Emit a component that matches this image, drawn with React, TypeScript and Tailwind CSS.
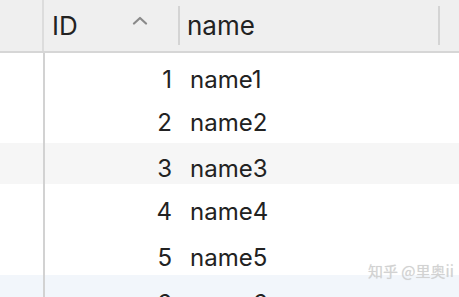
import React from "react";

const rows = [
  { id: 1, name: "name1", h: "h-[45px]", bg: "bg-white", pt: "pt-[8px]" },
  { id: 2, name: "name2", h: "h-[45px]", bg: "bg-white", pt: "pt-[4px]" },
  { id: 3, name: "name3", h: "h-[41px]", bg: "bg-[#f6f6f6]", pt: "pt-[10px]" },
  { id: 4, name: "name4", h: "h-[45px]", bg: "bg-white", pt: "pt-[10px]" },
  { id: 5, name: "name5", h: "h-[46px]", bg: "bg-white", pt: "pt-[11px]" },
  { id: 6, name: "name6", h: "h-[46px]", bg: "bg-[#f2f6fb]", pt: "pt-[12px]" },
];

export default function App() {
  return (
    <div
      className="w-[459px] h-[297px] overflow-hidden bg-white text-[#222] relative"
      style={{ fontFamily: "Inter, 'Noto Sans', sans-serif" }}
    >
      {/* header */}
      <div className="flex h-[53px] bg-[#efefef] border-b-2 border-[#d6d6d6]">
        <div className="w-[44px] shrink-0 border-r-2 border-[#dcdcdc]" />
        <div className="w-[134px] shrink-0 flex items-center justify-between pl-[8px] pr-[30px]">
          <span className="text-[26px] leading-none">ID</span>
          <svg width="16" height="9" viewBox="0 0 16 9" className="mb-[10px]">
            <path d="M2 7.5 L8 2 L14 7.5" fill="none" stroke="#8a8a8a" strokeWidth="2.2" strokeLinecap="round" strokeLinejoin="round" />
          </svg>
        </div>
        <div className="flex items-center">
          <div className="w-[2px] h-[39px] bg-[#d4d4d4]" />
        </div>
        <div className="w-[258px] shrink-0 flex items-center pl-[7px]">
          <span className="text-[26px] leading-none">name</span>
        </div>
        <div className="flex items-center">
          <div className="w-[2px] h-[39px] bg-[#d4d4d4]" />
        </div>
        <div className="flex-1" />
      </div>
      {/* body */}
      <div className="flex flex-col">
        {rows.map((r) => (
          <div key={r.id} className={`flex ${r.h} ${r.bg} shrink-0`}>
            <div className="w-[45px] shrink-0 border-r-2 border-[#d2d2d2]" />
            <div className={`w-[134px] shrink-0 flex items-center justify-end pr-[7px] ${r.pt}`}>
              <span className="text-[24px] leading-none">{r.id}</span>
            </div>
            <div className={`flex-1 flex items-center pl-[11px] ${r.pt}`}>
              <span className="text-[24px] leading-none">{r.name}</span>
            </div>
          </div>
        ))}
      </div>
      <div
        className="absolute left-[368px] top-[263px] text-[15px] leading-none text-[#d2d2d2] whitespace-nowrap"
        style={{ fontFamily: "'Noto Sans CJK SC', sans-serif", textShadow: "0 0 1px rgba(0,0,0,0.12)" }}
      >
        知乎 @里奥ii
      </div>
    </div>
  );
}
